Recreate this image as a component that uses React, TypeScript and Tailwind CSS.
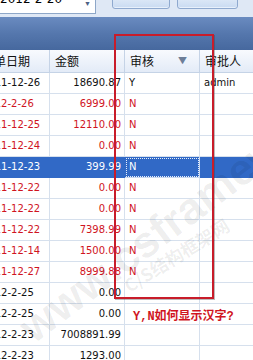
import React from "react";

type Row = { d: string; a: string; s: string; p: string; tone: "black" | "red" | "sel" };

const rows: Row[] = [
  { d: "2011-12-26", a: "18690.87", s: "Y", p: "admin", tone: "black" },
  { d: "2012-2-26", a: "6999.00", s: "N", p: "", tone: "red" },
  { d: "2011-12-25", a: "12110.00", s: "N", p: "", tone: "red" },
  { d: "2011-12-24", a: "0.00", s: "N", p: "", tone: "red" },
  { d: "2011-12-23", a: "399.99", s: "N", p: "", tone: "sel" },
  { d: "2011-12-22", a: "0.00", s: "N", p: "", tone: "red" },
  { d: "2011-12-22", a: "0.00", s: "N", p: "", tone: "red" },
  { d: "2011-12-22", a: "7398.99", s: "N", p: "", tone: "red" },
  { d: "2011-12-14", a: "1500.00", s: "N", p: "", tone: "red" },
  { d: "2011-12-27", a: "8999.88", s: "N", p: "", tone: "red" },
  { d: "2012-2-25", a: "0.00", s: "", p: "", tone: "black" },
  { d: "2012-2-25", a: "0.00", s: "", p: "", tone: "black" },
  { d: "2012-2-23", a: "7008891.99", s: "", p: "", tone: "black" },
  { d: "2012-2-23", a: "1293.00", s: "", p: "", tone: "black" },
];

const cjk = { fontFamily: '"Noto Sans CJK SC", "Noto Sans", sans-serif' };
const num = { fontFamily: '"DejaVu Sans", Verdana, sans-serif' };

export default function App() {
  return (
    <div className="relative w-[253px] h-[360px] overflow-hidden bg-white">
      {/* top toolbar strip */}
      <div className="flex h-[17px] bg-[#dfe8f5] overflow-hidden">
        <div
          className="relative -ml-[3px] -mt-[9px] w-[99px] h-[23px] shrink-0 border border-[#8ea7c8] bg-white flex items-end"
        >
          <span className="pl-[2px] pb-[8px] text-[12px] leading-none text-black" style={num}>
            2012-2-20
          </span>
          <span className="absolute right-[4px] top-[8px] text-[7px] leading-none text-[#4d6185]">▼</span>
        </div>
        <div className="ml-[16px] -mt-[10px] w-[58px] h-[19px] shrink-0 rounded-b-[3px] border border-[#8fa9cf] bg-gradient-to-b from-[#eef4fc] to-[#c9daf1] shadow-[inset_0_-1px_0_#e8f0fb]" />
        <div className="ml-[7px] -mt-[10px] w-[61px] h-[19px] shrink-0 rounded-b-[3px] border border-[#8fa9cf] bg-gradient-to-b from-[#eef4fc] to-[#c9daf1] shadow-[inset_0_-1px_0_#e8f0fb]" />
      </div>

      {/* dark band */}
      <div className="h-[33px] bg-gradient-to-b from-[#6a8bc0] via-[#5577ad] to-[#46689e]" />

      {/* grid */}
      <div className="-ml-[19px] w-[300px]">
        <div
          className="grid grid-cols-[69px_75px_75px_81px] h-[23px] bg-gradient-to-b from-[#f8fafe] to-[#e3ebf7] border-b border-[#c5d3e6] text-[12px] text-[#111]"
          style={cjk}
        >
          <div className="flex items-center pl-[1px] border-r border-[#c5d3e6] whitespace-nowrap">订单日期</div>
          <div className="flex items-center pl-[5px] border-r border-[#c5d3e6]">金额</div>
          <div className="flex items-center pl-[5px] pr-[12px] border-r border-[#c5d3e6] justify-between">
            <span>审核</span>
            <span className="text-[9px] text-[#6d7e98]">▼</span>
          </div>
          <div className="flex items-center pl-[5px]">审批人</div>
        </div>
        {rows.map((r, i) => {
          const sel = r.tone === "sel";
          const color = sel ? "text-white" : r.tone === "red" ? "text-[#d0141e]" : "text-[#111]";
          return (
            <div
              key={i}
              className={`grid grid-cols-[69px_75px_75px_81px] h-[21px] text-[10px] leading-none ${color} ${
                sel ? "bg-[#3169c6]" : "bg-transparent"
              }`}
              style={num}
            >
              <div className={`flex items-center pl-[1px] border-b border-r whitespace-nowrap overflow-hidden ${sel ? "border-[#3169c6]" : "border-[#d6e0ed]"}`}>
                {r.d}
              </div>
              <div className={`flex items-center justify-end pr-[3px] border-b border-r ${sel ? "border-[#3169c6]" : "border-[#d6e0ed]"}`}>
                {r.a}
              </div>
              <div className={`flex items-center pl-[4px] border-b border-r ${sel ? "border-[#c9d8f0] outline-1 outline-dotted outline-[#e6eefb] -outline-offset-2" : "border-[#d6e0ed]"}`}>
                {r.s}
              </div>
              <div className={`flex items-center pl-[4px] border-b ${sel ? "border-[#3169c6]" : "border-[#d6e0ed]"}`}>
                {r.p}
              </div>
            </div>
          );
        })}
      </div>

      {/* watermark */}
      <div className="pointer-events-none absolute inset-0 overflow-hidden">
        <span
          className="absolute left-[38px] top-[306px] origin-bottom-left -rotate-[37deg] whitespace-nowrap text-[44px] font-bold leading-none text-black/[0.07]"
          style={{ fontFamily: '"Liberation Sans", Arial, sans-serif' }}
        >
          www.csframework.com
        </span>
        <span
          className="absolute left-[130px] top-[276px] origin-bottom-left -rotate-[32deg] whitespace-nowrap text-[18px] font-bold leading-none text-black/[0.07]"
          style={cjk}
        >
          C/S结构框架网
        </span>
      </div>

      {/* annotation */}
      <div className="pointer-events-none absolute left-[114px] top-[34px] w-[100px] h-[265px] border-2 border-[#c81c2a] shadow-[1px_1px_0_rgba(60,60,60,0.35)]" />
      <div
        className="pointer-events-none absolute left-[133px] top-[311px] text-[12px] font-bold leading-none text-[#d0141e] whitespace-nowrap"
        style={{ fontFamily: '"Liberation Mono", "Noto Sans CJK SC", monospace' }}
      >
        Y,N如何显示汉字?
      </div>
    </div>
  );
}
